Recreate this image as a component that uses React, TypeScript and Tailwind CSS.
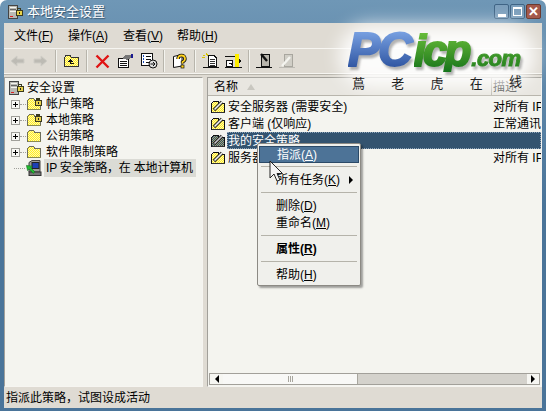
const font = "font-['Liberation_Sans','Noto_Sans_CJK_SC',sans-serif]";

const Dither = ({ id, a = '#ffee22', b = '#fff7b0' }: { id: string; a?: string; b?: string }) => (
  <pattern id={id} width="2" height="2" patternUnits="userSpaceOnUse">
    <rect width="2" height="2" fill={b} />
    <rect width="1" height="1" fill={a} />
    <rect x="1" y="1" width="1" height="1" fill={a} />
  </pattern>
);

const Lock = ({ x = 0, y = 0 }: { x?: number; y?: number }) => (
  <g transform={`translate(${x} ${y})`}>
    <path d="M2 4V2.5h3V4" fill="none" stroke="#3a3a20" strokeWidth="1.4" />
    <rect x="0.5" y="4" width="6" height="5" fill="#e8d24a" stroke="#3a3a20" />
    <rect x="3" y="5.5" width="1" height="2" fill="#222" />
  </g>
);

const ServerLock = () => (
  <svg width="16" height="16" viewBox="0 0 16 16" shapeRendering="crispEdges" className="shrink-0">
    <rect x="1.5" y="1.5" width="9" height="13" fill="#b9b9b4" stroke="#444" />
    <rect x="3" y="3" width="6" height="1" fill="#f4f4ef" />
    <rect x="3" y="5" width="6" height="1" fill="#666" />
    <rect x="3" y="7" width="6" height="1" fill="#f4f4ef" />
    <rect x="3" y="12" width="3" height="1" fill="#d22" />
    <Lock x={8.5} y={2} />
  </svg>
);

const Folder = ({ id, lock }: { id: string; lock?: boolean }) => (
  <svg width="16" height="16" viewBox="0 0 16 16" shapeRendering="crispEdges" className="shrink-0">
    <defs>
      <Dither id={id} />
    </defs>
    <path d="M1.5 13.5V4.5L3.5 2.5H7.5L9 4.5H14.5V13.5Z" fill={`url(#${id})`} stroke="#6d6d5c" />
    <rect x="2" y="13" width="13" height="1" fill="#8a8a50" />
    {lock && <Lock x={8.5} y={0.5} />}
  </svg>
);

const PolicyIcon = ({ id, selected }: { id: string; selected?: boolean }) => (
  <svg width="16" height="17" viewBox="0 0 16 17" shapeRendering="crispEdges" className="shrink-0">
    <defs>
      <Dither id={id} a={selected ? '#a8a870' : '#ffee22'} b={selected ? '#2f5070' : '#fff7b0'} />
    </defs>
    <path d="M1.5 14.5V5.5L3.5 3.5H8.5V5.5H14.5V14.5Z" fill={`url(#${id})`} stroke="#111" />
    <path d="M4 12L12 4" stroke="#222" strokeWidth="3.4" shapeRendering="auto" />
    <path d="M4.5 11.5L12 4" stroke={selected ? '#c8c8c8' : '#f4f4ef'} strokeWidth="1.6" shapeRendering="auto" />
    <rect x="2" y="14" width="13" height="1" fill="#333" />
  </svg>
);

const IpIcon = () => (
  <svg width="18" height="18" viewBox="0 0 18 18" className="shrink-0">
    <path d="M3 3.5L6 1.5H14V13H3Z" fill="#9c9c98" stroke="#444" />
    <rect x="6" y="3.5" width="7" height="6" fill="#1c3fb4" stroke="#222" />
    <rect x="3" y="13" width="12" height="3.5" fill="#777" stroke="#333" />
    <path d="M0.5 5.5L2 12L4 10L9 15.5L11 13.5L6 8.5L8 6.5Z" transform="translate(0 2) scale(.8)" fill="#22bb33" stroke="#0a6a16" strokeWidth=".7" />
  </svg>
);

const Plus = () => (
  <span className="relative flex h-[9px] w-[9px] shrink-0 items-center justify-center border border-[#a0a09a] bg-[#f8f8f4]">
    <span className="absolute h-px w-[5px] bg-black" />
    <span className="absolute h-[5px] w-px bg-black" />
  </span>
);

const tree = [
  { id: 'acct', label: '帐户策略', lock: true },
  { id: 'local', label: '本地策略', lock: true },
  { id: 'pubkey', label: '公钥策略' },
  { id: 'soft', label: '软件限制策略' },
];

const rows = [
  { id: 'p1', name: '安全服务器 (需要安全)', desc: '对所有 IP' },
  { id: 'p2', name: '客户端 (仅响应)', desc: '正常通讯' },
  { id: 'p3', name: '我的安全策略', desc: '', selected: true },
  { id: 'p4', name: '服务器 (请求安全)', desc: '对所有 IP' },
];

const menus = [
  { label: '文件', key: 'F', width: 'w-[54px]' },
  { label: '操作', key: 'A', width: 'w-[55px]' },
  { label: '查看', key: 'V', width: 'w-[54px]' },
  { label: '帮助', key: 'H', width: 'w-[50px]' },
];

const Sep = () => <span className="mx-[3px] h-[22px] w-[2px] shrink-0 border-l border-[#b8b5ac] bg-[#f4f4ef]" />;

const Tool = ({ children }: { children: React.ReactNode }) => (
  <span className="flex h-[22px] w-[23px] shrink-0 items-center justify-center">{children}</span>
);

const Toolbar = () => (
  <div className="flex h-[26px] items-center border-y border-[#f6f5f1] pl-[2px] shadow-[0_1px_0_#b8b5ac]">
    <Tool>
      <svg width="15" height="12" viewBox="0 0 15 12"><path d="M1 6L7 1V4H14V8H7V11Z" fill="#bdbbb4" stroke="#cfcdc6" /></svg>
    </Tool>
    <Tool>
      <svg width="15" height="12" viewBox="0 0 15 12"><path d="M14 6L8 1V4H1V8H8V11Z" fill="#bdbbb4" stroke="#cfcdc6" /></svg>
    </Tool>
    <Sep />
    <Tool>
      <svg width="17" height="14" viewBox="0 0 17 14" shapeRendering="crispEdges">
        <defs><Dither id="up" /></defs>
        <path d="M1.5 12.5V3.5L3 1.5H7L8.5 3.5H15.5V12.5Z" fill="url(#up)" stroke="#333" />
        <path d="M7.5 5L5 7.5H7V10H11V9H8V7.5H10Z" fill="#111" />
      </svg>
    </Tool>
    <Sep />
    <Tool>
      <svg width="15" height="15" viewBox="0 0 15 15"><path d="M1.5 1.5L13.5 13.5M13.5 1.5L1.5 13.5" stroke="#e01414" strokeWidth="2.4" /></svg>
    </Tool>
    <Tool>
      <svg width="17" height="15" viewBox="0 0 17 15" shapeRendering="crispEdges">
        <rect x="1.5" y="4.5" width="10" height="9" fill="#fff" stroke="#111" />
        <path d="M3 7H10M3 9H10M3 11H10" stroke="#111" />
        <path d="M5 4L9 1H14V4L10 6Z" fill="#777" />
        <rect x="14" y="0" width="2" height="4" fill="#1a1a90" />
      </svg>
    </Tool>
    <Tool>
      <svg width="18" height="16" viewBox="0 0 18 16" shapeRendering="crispEdges">
        <rect x="1.5" y="0.5" width="11" height="12" fill="#fff" stroke="#111" />
        <path d="M3 3H4M3 6H4M3 9H4" stroke="#1a4fc0" strokeWidth="1.2" />
        <path d="M6 3H11M6 6H11M6 9H9" stroke="#111" />
        <circle cx="13" cy="11" r="4" fill="#ddd" stroke="#111" shapeRendering="auto" />
        <path d="M10.5 11H15M13 9L15 11L13 13" stroke="#111" fill="none" shapeRendering="auto" />
      </svg>
    </Tool>
    <Sep />
    <Tool>
      <svg width="16" height="16" viewBox="0 0 16 16">
        <path d="M1.5 3.5L10 1.5V13L1.5 14.5Z" fill="#fff" stroke="#111" />
        <path d="M6 6Q6 2.5 9.5 2.5T13 6Q13 7.8 10.5 9V10.5" fill="none" stroke="#111" strokeWidth="3.4" />
        <path d="M6 6Q6 2.5 9.5 2.5T13 6Q13 7.8 10.5 9V10.5" fill="none" stroke="#ffd21e" strokeWidth="1.8" />
        <rect x="9" y="12" width="3" height="3" fill="#ffd21e" stroke="#111" strokeWidth=".7" />
      </svg>
    </Tool>
    <Sep />
    <Tool>
      <svg width="18" height="16" viewBox="0 0 18 16" shapeRendering="crispEdges">
        <path d="M6.5 2.5H12L14.5 5V13.5H6.5Z" fill="#fff" stroke="#111" />
        <path d="M8 6H13M8 8H13M8 10H13M8 12H13" stroke="#333" />
        <path d="M1 2L3 3M4 0V2M6 1L5 3M0 5L3 4" stroke="#d8c400" />
        <rect x="1" y="14" width="16" height="1" fill="#111" />
      </svg>
    </Tool>
    <Tool>
      <svg width="18" height="16" viewBox="0 0 18 16" shapeRendering="crispEdges">
        <rect x="10" y="1" width="4" height="13" fill="#ffee00" />
        <rect x="0" y="3" width="10" height="1" fill="#111" />
        <rect x="1.5" y="7.5" width="6" height="6" fill="#fff" stroke="#111" />
        <path d="M14 6L17 8L14 10Z" fill="#111" />
        <rect x="0" y="14" width="17" height="1" fill="#111" />
        <path d="M4 10H6V12" stroke="#111" fill="none" />
      </svg>
    </Tool>
    <Sep />
    <Tool>
      <svg width="18" height="16" viewBox="0 0 18 16" shapeRendering="crispEdges">
        <rect x="5" y="1" width="8" height="12" fill="#b8b5ac" stroke="#111" />
        <path d="M5 1L11 8" stroke="#111" strokeWidth="2.4" shapeRendering="auto" />
        <rect x="0" y="14" width="16" height="1" fill="#111" />
      </svg>
    </Tool>
    <Tool>
      <svg width="18" height="16" viewBox="0 0 18 16" shapeRendering="crispEdges">
        <rect x="5.5" y="1.5" width="8" height="12" fill="#d0cec6" stroke="#a8a69e" />
        <path d="M3 13L11 4" stroke="#f4f4ef" strokeWidth="2.4" shapeRendering="auto" />
        <rect x="0" y="14" width="16" height="1" fill="#bdbbb4" />
      </svg>
    </Tool>
  </div>
);

const Hotkey = ({ label, k }: { label: string; k: string }) => (
  <>
    {label}(<span className="underline underline-offset-1">{k}</span>)
  </>
);

const MenuItem = ({ label, k, active, bold, arrow }: { label: string; k: string; active?: boolean; bold?: boolean; arrow?: boolean }) => (
  <div
    className={`mx-[1px] flex h-[17px] items-center pl-[17px] pr-[6px] text-[12px] ${active ? 'border border-[#2b4a68] bg-[#4d7397] text-white' : 'text-black'} ${bold ? 'font-bold' : ''}`}
  >
    <span className="flex-1"><Hotkey label={label} k={k} /></span>
    {arrow && <span className="h-0 w-0 border-y-[4px] border-l-[4px] border-y-transparent border-l-black" />}
  </div>
);

const MenuSep = () => <div className="mx-[3px] mb-[4px] mt-[4px] h-px bg-[#b5b3aa]" />;

const ContextMenu = () => (
  <div className="absolute left-[257px] top-[143px] w-[104px] rounded-[2px] border border-[#8c8a84] bg-[#f0f0ec] py-[2px] shadow-[2px_2px_2px_rgba(0,0,0,0.35)]">
    <MenuItem label="指派" k="A" active />
    <div className="mx-[3px] mb-[4px] mt-[3px] h-px bg-[#b5b3aa]" />
    <MenuItem label="所有任务" k="K" arrow />
    <MenuSep />
    <MenuItem label="删除" k="D" />
    <MenuItem label="重命名" k="M" />
    <MenuSep />
    <MenuItem label="属性" k="R" bold />
    <MenuSep />
    <MenuItem label="帮助" k="H" />
  </div>
);

const Watermark = () => (
  <div className="pointer-events-none absolute left-[335px] top-[25px] h-[75px] w-[205px]">
    <div className="absolute left-[4px] top-[0px] h-[62px] w-[196px] rounded-[30px] bg-white/90 blur-[9px]" />
    <div className="absolute left-0 top-[4px] flex items-baseline whitespace-nowrap pl-[13px] font-['Liberation_Sans',sans-serif] font-bold italic leading-[42px] drop-shadow-[2px_3px_1px_rgba(90,90,90,0.45)]">
      <span className="bg-gradient-to-b from-[#7ea6e6] to-[#2a4f9c] bg-clip-text pr-[3px] text-[48px] tracking-[-2px] text-transparent [-webkit-text-stroke:2px_transparent]">PC</span>
      <span className="bg-gradient-to-b from-[#6cc23c] to-[#12741a] bg-clip-text pr-[3px] text-[44px] tracking-[-3px] text-transparent [-webkit-text-stroke:2px_transparent]">icp</span>
      <span className="bg-gradient-to-b from-[#52ac30] to-[#12741a] bg-clip-text pr-[2px] text-[22px] tracking-[-0.5px] text-transparent [-webkit-text-stroke:1px_transparent]">.com</span>
    </div>
    <div className={`absolute left-[17px] top-[51px] flex w-[170px] justify-between text-[13px] leading-[16px] text-[#222] ${font}`}>
      <span>蔦</span><span>老</span><span>虎</span><span>在</span><span className="-translate-y-[2px]">线</span>
    </div>
  </div>
);

const Cursor = () => (
  <svg width="16" height="24" viewBox="0 0 16 24" className="absolute left-[269px] top-[160px]">
    <path d="M1 1V18L5 14L8 21L11 20L8 13.5H13.5Z" fill="#f4f4f4" stroke="#222" strokeWidth="1" />
  </svg>
);

const Scrollbar = () => (
  <div className="mx-[1px] mb-[1px] flex h-[12px] border border-[#a2a09a] bg-[#d4d2cc]">
    <span className="flex w-[13px] items-center justify-center bg-[#f6f6f2]">
      <span className="h-0 w-0 border-y-[4px] border-r-[4px] border-y-transparent border-r-black" />
    </span>
    <span className="flex w-[135px] items-center justify-center gap-px border-r border-[#a8a69e] bg-[#f8f8f6]">
      <span className="h-[6px] w-px bg-[#a8a69e]" />
      <span className="h-[6px] w-px bg-[#a8a69e]" />
      <span className="h-[6px] w-px bg-[#a8a69e]" />
    </span>
    <span className="flex-1" />
    <span className="flex w-[12px] items-center justify-center bg-[#f6f6f2]">
      <span className="h-0 w-0 border-y-[4px] border-l-[4px] border-y-transparent border-l-black" />
    </span>
  </div>
);

export default function App() {
  return (
    <div className={`relative h-[411px] w-[546px] overflow-hidden bg-white ${font}`}>
      <div className="flex h-full flex-col rounded-t-[7px] bg-gradient-to-b from-[#6f97b6] via-[#4a7499] to-[#4a7499] px-[4px] pb-[3px]">
        {/* title bar */}
        <div className="flex h-[23px] shrink-0 items-center pr-[1px]">
          <span className="ml-[3px] mr-[4px]"><ServerLock /></span>
          <span className="flex-1 text-[13px] leading-none text-white [text-shadow:1px_1px_1px_rgba(20,40,60,0.6)]">本地安全设置</span>
          <span className="flex gap-[1px]">
            <span className="flex h-[15px] w-[15px] items-end justify-center rounded-[2px] border border-[#3f6485] bg-[#7c9fbc] pb-[1px]">
              <span className="h-[3px] w-[8px] bg-white" />
            </span>
            <span className="flex h-[15px] w-[15px] items-center justify-center rounded-[2px] border border-[#3f6485] bg-[#7c9fbc]">
              <span className="h-[9px] w-[9px] border border-t-2 border-white" />
            </span>
            <span className="flex h-[15px] w-[15px] items-center justify-center rounded-[2px] border border-[#6b3a30] bg-[#a3584a] text-[13px] font-bold leading-none text-white">✕</span>
          </span>
        </div>

        <div className="flex min-h-0 flex-1 flex-col bg-[#dfdbd3]">
          {/* menu */}
          <div className="flex h-[25px] shrink-0 items-center pl-[10px] pt-px text-[12px] text-black">
            {menus.map(m => (
              <span key={m.key} className={m.width}><Hotkey label={m.label} k={m.key} /></span>
            ))}
          </div>
          <Toolbar />

          {/* panes */}
          <div className="mt-[3px] flex min-h-0 flex-1 gap-[4px] text-[12px] text-black">
            <div className="w-[199px] shrink-0 border border-[#a2a09a] border-b-[#f6f5f1] border-r-[#f6f5f1] bg-[#f4f4ef] pl-[2px] pt-px">
              <div className="flex h-[17px] items-center gap-[3px] pl-px"><ServerLock />安全设置</div>
              {tree.map(t => (
                <div key={t.id} className="flex h-[16px] items-center">
                  <span className="ml-[4px]"><Plus /></span>
                  <span className="w-[6px] border-t border-dotted border-[#a0a09a]" />
                  <Folder id={`f-${t.id}`} lock={t.lock} />
                  <span className="ml-[4px]">{t.label}</span>
                </div>
              ))}
              <div className="flex h-[16px] items-center">
                <span className="ml-[7px] mr-px w-[11px] border-t border-dotted border-[#a0a09a]" />
                <IpIcon />
                <span className="w-[152px] whitespace-nowrap bg-[#dbdbd5] pl-[2px] tracking-[-0.2px]">IP 安全策略，在 本地计算机</span>
              </div>
            </div>

            <div className="flex min-w-0 flex-1 flex-col border border-[#a2a09a] border-b-[#f6f5f1] border-r-[#f6f5f1] bg-[#f4f4ef]">
              <div className="flex h-[18px] shrink-0 items-center border-b border-[#b8b5ac] bg-[#e8e6e0]">
                <span className="flex w-[284px] items-center border-r border-[#b8b5ac] pl-[6px]">
                  名称
                  <span className="ml-[9px] h-0 w-0 border-x-[4px] border-b-[6px] border-x-transparent border-b-[#c9c7c0]" />
                </span>
                <span className="pl-[1px] text-[#333]">描述</span>
              </div>
              <div className="min-h-0 flex-1 pt-[2px]">
                {rows.map(r => (
                  <div key={r.id} className="flex h-[17px] items-center whitespace-nowrap pl-[2px]">
                    <PolicyIcon id={r.id} selected={r.selected} />
                    {r.selected ? (
                      <span className="ml-px flex h-full flex-1 items-center border border-dotted border-[#8fa5ba] bg-[#33536f] text-white">{r.name}</span>
                    ) : (
                      <>
                        <span className="ml-[2px] w-[266px]">{r.name}</span>
                        <span className="ml-[-1px] flex-1 overflow-hidden">{r.desc}</span>
                      </>
                    )}
                  </div>
                ))}
              </div>
              <Scrollbar />
            </div>
          </div>

          {/* status */}
          <div className="flex h-[21px] shrink-0 items-center pl-[2px] text-[12px] text-black">指派此策略，试图设成活动</div>
        </div>
      </div>

      <Watermark />
      <ContextMenu />
      <Cursor />
    </div>
  );
}
